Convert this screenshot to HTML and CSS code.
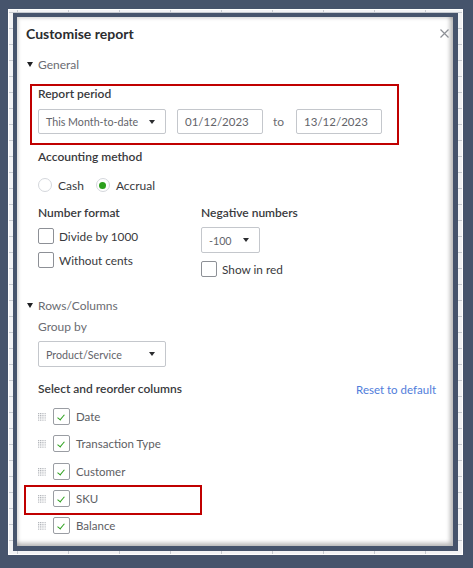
FILE: index.html
```html
<!DOCTYPE html>
<html lang="en">
<head>
    <meta charset="UTF-8">
    <meta name="viewport" content="width=device-width, initial-scale=1.0">
    <title>Customise report</title>
    <link rel="stylesheet" href="styles.css">
</head>
<body>
    <div class="sheet">
        <div class="frame">
            <div class="modal">
                <div class="modal-head">
                    <h2>Customise report</h2>
                    <svg class="close" width="9" height="9" viewBox="0 0 9 9">
                        <path d="M0.5 0.5 L8.5 8.5 M8.5 0.5 L0.5 8.5" stroke="#8d9096" stroke-width="1.2" fill="none"/>
                    </svg>
                </div>

                <div class="group-title"><span class="caret"></span>General</div>

                <div class="highlight period">
                    <div class="label">Report period</div>
                    <div class="period-row">
                        <div class="select select-period">This Month-to-date<span class="arrow"></span></div>
                        <div class="input date">01/12/2023</div>
                        <span class="to">to</span>
                        <div class="input date">13/12/2023</div>
                    </div>
                </div>

                <div class="label method">Accounting method</div>
                <div class="radios">
                    <span class="radio"></span><span class="opt">Cash</span>
                    <span class="radio on"></span><span class="opt">Accrual</span>
                </div>

                <div class="two-col">
                    <div class="col-left">
                        <div class="label">Number format</div>
                        <div class="check-row first"><span class="box"></span>Divide by 1000</div>
                        <div class="check-row"><span class="box"></span>Without cents</div>
                    </div>
                    <div class="col-right">
                        <div class="label">Negative numbers</div>
                        <div class="select select-neg">-100<span class="arrow"></span></div>
                        <div class="check-row"><span class="box"></span>Show in red</div>
                    </div>
                </div>

                <div class="group-title rows-title"><span class="caret"></span>Rows/Columns</div>
                <div class="sub-label">Group by</div>
                <div class="select select-group">Product/Service<span class="arrow"></span></div>

                <div class="columns-head">
                    <span class="label">Select and reorder columns</span>
                    <span class="reset">Reset to default</span>
                </div>

                <ul class="column-list">
                    <li><svg class="grip"><use href="#grip"/></svg><span class="box checked"></span>Date</li>
                    <li><svg class="grip"><use href="#grip"/></svg><span class="box checked"></span>Transaction Type</li>
                    <li><svg class="grip"><use href="#grip"/></svg><span class="box checked"></span>Customer</li>
                    <li class="marked"><svg class="grip"><use href="#grip"/></svg><span class="box checked"></span>SKU</li>
                    <li><svg class="grip"><use href="#grip"/></svg><span class="box checked"></span>Balance</li>
                </ul>
            </div>
        </div>
    </div>

    <!-- drag handle dots, reused by each column row -->
    <svg width="0" height="0" class="defs">
        <defs>
            <pattern id="dots" width="2.2" height="2.2" patternUnits="userSpaceOnUse">
                <rect width="1.1" height="1.1" fill="#a3a7ad"/>
            </pattern>
            <g id="grip">
                <rect x="0" y="0" width="8" height="8" fill="url(#dots)"/>
            </g>
        </defs>
    </svg>
</body>
</html>
```

FILE: styles.css
```css
body {
    margin: 0;
    padding: 9px 10px 13px 8px;
    background-color: #46546c;
    font-family: Lato, "Open Sans", sans-serif;
    color: #393a3d;
}
.sheet {
    height: 546px;
    box-sizing: border-box;
    padding: 3px 4px;
    border: 1px solid #fff;
    background-color: #f2f3f5;
    background-image:
        linear-gradient(to right, #c6cad0 1px, transparent 1px),
        linear-gradient(to bottom, #c6cad0 1px, transparent 1px);
    background-size: 51px 16px;
    background-position: 8px 2px;
}
.frame {
    height: 100%;
    box-sizing: border-box;
    border: 4px solid #46546c;
    border-right-width: 5px;
    border-bottom-width: 5px;
}
.modal {
    height: 100%;
    box-sizing: border-box;
    background: #fff;
    padding: 6px 4px 0 9px;
    box-shadow: inset -3px -3px 4px rgba(0, 0, 0, 0.28), inset 2px 2px 3px rgba(0, 0, 0, 0.12);
}
.defs {
    position: absolute;
}

/* header */
.modal-head {
    display: flex;
    justify-content: space-between;
    align-items: center;
    height: 20px;
}
h2 {
    margin: 0;
    font-size: 14px;
    font-weight: bold;
    color: #2b2c2f;
}

/* section toggles */
.group-title {
    display: flex;
    align-items: center;
    height: 16px;
    margin-top: 13px;
    font-size: 12px;
    color: #6b6c72;
}
.caret {
    width: 0;
    height: 0;
    border-left: 3.5px solid transparent;
    border-right: 3.5px solid transparent;
    border-top: 5px solid #1f2023;
    margin: 1px 5px 0 1px;
}
.rows-title {
    margin-top: 20px;
}

.label {
    font-size: 12px;
    line-height: 16px;
    font-weight: 600;
    color: #393a3d;
}
.sub-label {
    font-size: 12px;
    line-height: 16px;
    color: #6b6c72;
    margin: 6px 0 0 12px;
}

/* red outline */
.highlight {
    border: 2px solid #c00000;
}
.period {
    margin: 12px 0 0 4px;
    width: 369px;
    box-sizing: border-box;
    padding: 0 0 9px 6px;
}
.period-row {
    display: flex;
    align-items: center;
    margin-top: 7px;
}

/* selects and inputs */
.select, .input {
    display: flex;
    align-items: center;
    box-sizing: border-box;
    height: 26px;
    border: 1px solid #c4c7cc;
    border-radius: 2px;
    padding-left: 7px;
    color: #63646a;
}
.select {
    justify-content: space-between;
    padding-right: 10px;
    font-size: 10.7px;
}
.input {
    font-size: 11.5px;
}
.arrow {
    width: 0;
    height: 0;
    border-left: 3px solid transparent;
    border-right: 3px solid transparent;
    border-top: 4px solid #2b2c2f;
}
.select-period {
    width: 128px;
    height: 25px;
}
.date {
    width: 86px;
    height: 25px;
}
.select-period + .date {
    margin-left: 11px;
}
.to {
    font-size: 12px;
    color: #6b6c72;
    margin: 0 12px 0 10px;
}

.method {
    margin: 4px 0 0 12px;
}
.radios {
    display: flex;
    align-items: center;
    height: 16px;
    margin: 12px 0 0 12px;
    font-size: 12px;
}
.radio {
    width: 14px;
    height: 14px;
    box-sizing: border-box;
    border: 1px solid #d4d7dc;
    border-radius: 50%;
    display: flex;
    align-items: center;
    justify-content: center;
}
.radio.on::after {
    content: "";
    width: 7px;
    height: 7px;
    border-radius: 50%;
    background: #2ca01c;
}
.opt {
    margin: 0 12px 0 6px;
}

.two-col {
    display: flex;
    margin: 12px 0 0 12px;
}
.col-left {
    width: 163px;
}
.check-row {
    display: flex;
    align-items: center;
    height: 16px;
    margin-top: 8px;
    font-size: 11.8px;
}
.col-left .first {
    margin-top: 7px;
}
.box {
    width: 16px;
    height: 16px;
    box-sizing: border-box;
    border: 1px solid #8d9096;
    border-radius: 2px;
    margin-right: 5px;
    flex-shrink: 0;
}
.select-neg {
    width: 59px;
    margin-top: 6px;
}

.select-group {
    width: 128px;
    margin: 6px 0 0 12px;
}

.columns-head {
    display: flex;
    justify-content: space-between;
    align-items: center;
    margin: 14px 13px 0 12px;
    height: 16px;
}
.reset {
    font-size: 11.5px;
    color: #4f7ddb;
}

/* column picker */
.column-list {
    list-style: none;
    margin: 6px 0 0 12px;
    padding: 0;
}
.column-list li {
    position: relative;
    display: flex;
    align-items: center;
    height: 27.3px;
    font-size: 11.5px;
    color: #5d5e63;
}
.grip {
    width: 8px;
    height: 8px;
    margin: 1px 7px 0 0;
    flex-shrink: 0;
}
.box.checked {
    width: 17px;
    height: 17px;
    border-color: #9a9da3;
    position: relative;
    margin-right: 6px;
}
.box.checked::after {
    content: "";
    position: absolute;
    left: 5px;
    top: 4px;
    width: 3px;
    height: 6px;
    border: solid #2ca01c;
    border-width: 0 1.4px 1.4px 0;
    transform: rotate(40deg);
}
.marked::before {
    content: "";
    position: absolute;
    left: -14px;
    top: 0;
    width: 178px;
    height: 30px;
    box-sizing: border-box;
    border: 2px solid #c00000;
}
```
